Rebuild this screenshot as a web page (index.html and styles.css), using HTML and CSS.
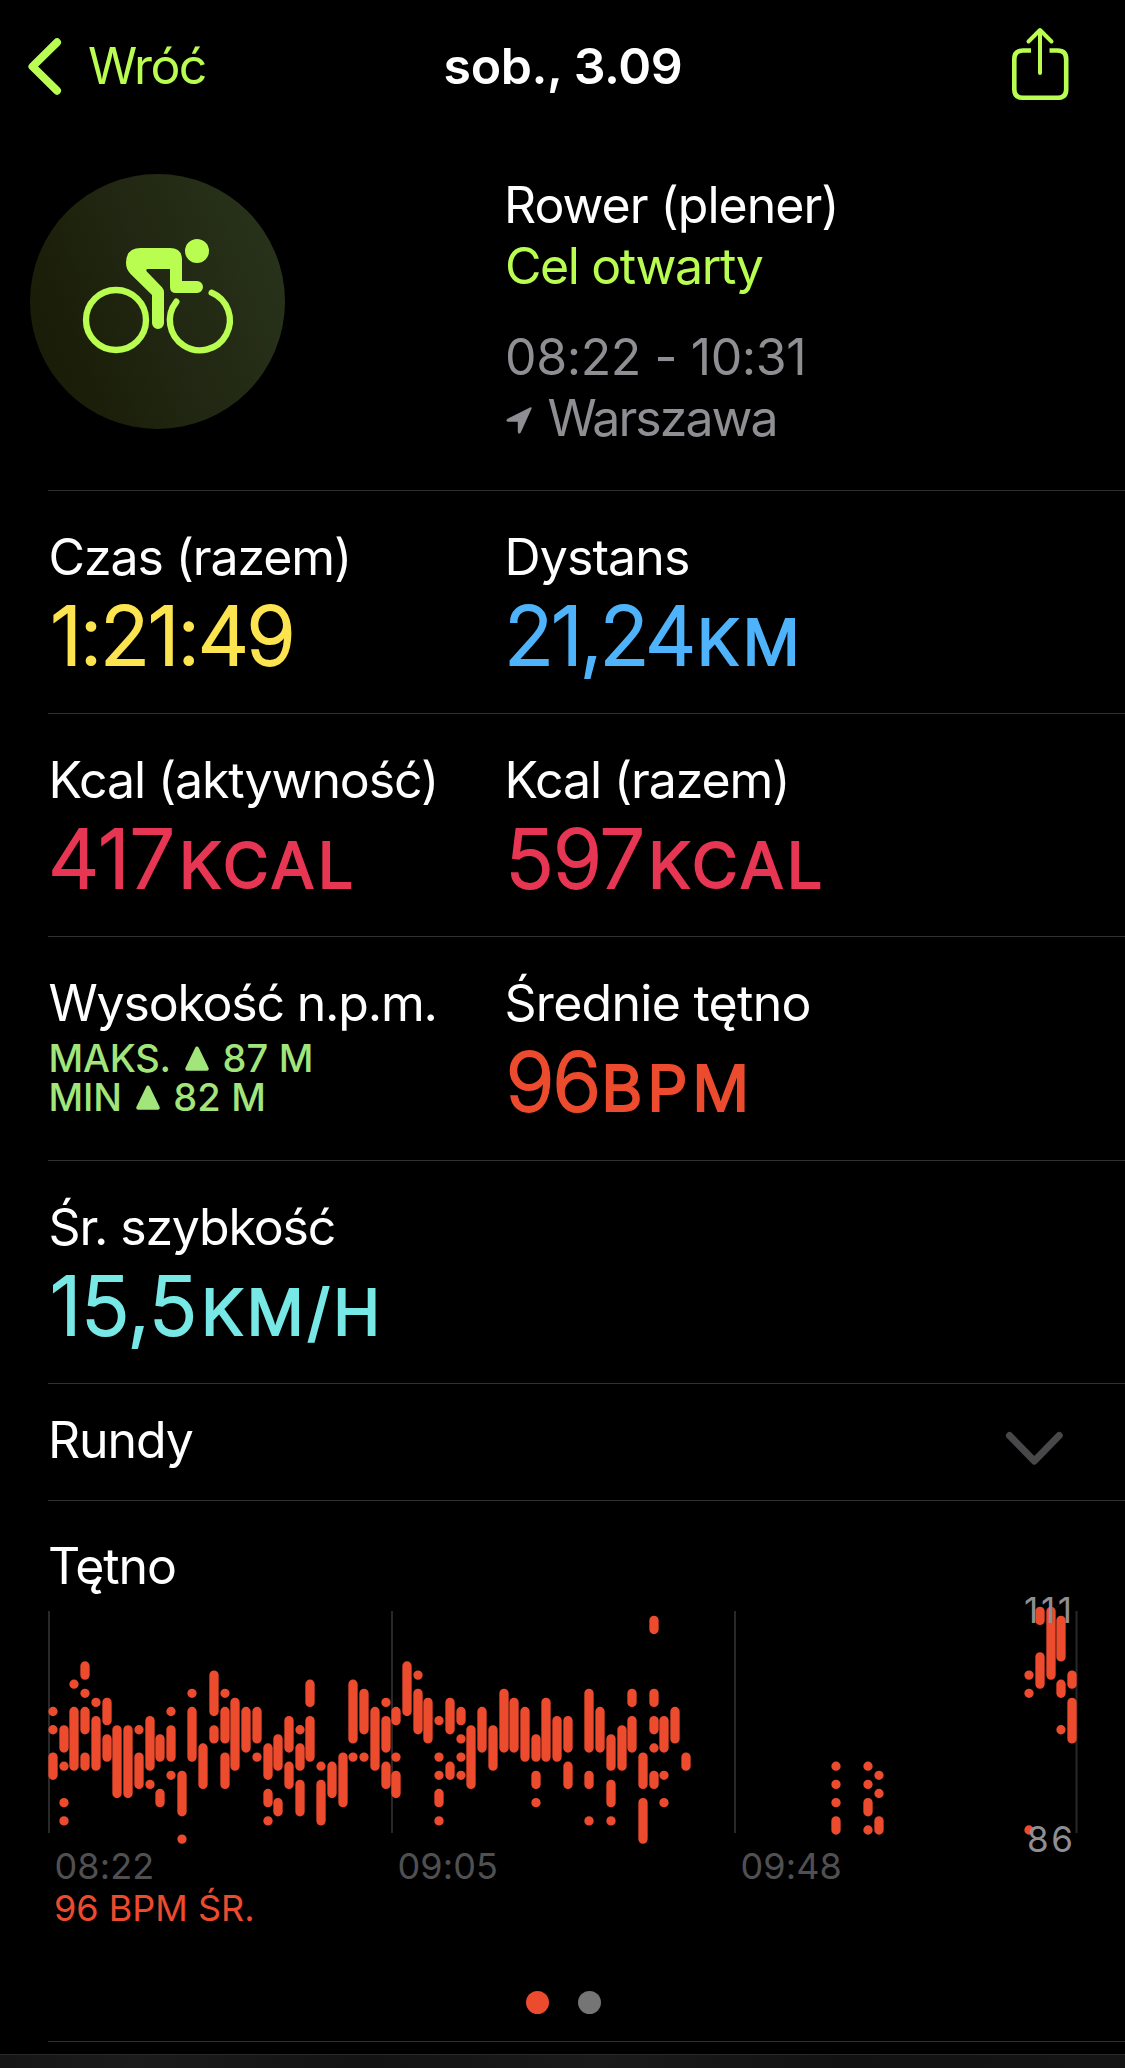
FILE: index.html
```html
<!DOCTYPE html>
<html lang="pl">
<head>
<meta charset="utf-8">
<title>sob., 3.09</title>
<link rel="stylesheet" href="styles.css">
</head>
<body>
<header class="nav">
  <a class="back">
    <svg class="back-icon" viewBox="28 37 33 57"><path d="M57 41.3 32.5 65.5 57 89.7"/></svg>
    <span class="back-text">Wróć</span>
  </a>
  <h1 class="title">sob., 3.09</h1>
  <svg class="share-icon" viewBox="1010 26 60 76"><path class="box" d="M1031 50.5h-8q-8.700 0-8.700 8.700v30q0 8.600 8.700 8.600h34.500q8.700 0 8.700-8.600v-30q0-8.700-8.700-8.700h-8"/><path class="arrow" d="M1040 73V30.500M1028.500 41.500 1040 30l11.500 11.500"/></svg>
</header>

<section class="summary">
  <div class="badge">
    <svg viewBox="30 27 765 765">
      <g class="wheels">
        <circle cx="288" cy="465" r="90"/>
        <path d="M469 410A90 90 0 1 0 575 383"/>
      </g>
      <circle class="solid" cx="531" cy="258" r="36"/>
      <path class="solid" d="M362 249H450Q486 249 486 285V348H531A18 18 0 0 1 531 384H468Q450 384 450 366V312H382Q376 314 381 320L426 367Q432 374 432 382V474A18 18 0 0 1 396 474V390L331 326Q318 312 318 294Q318 249 362 249Z"/>
    </svg>
  </div>
  <div class="summary-text">
    <p class="label name">Rower (plener)</p>
    <p class="label goal">Cel otwarty</p>
    <p class="label hours">08:22 - 10:31</p>
    <p class="label place"><svg class="pin" viewBox="505 406 28 29"><path d="M530.500 407.300 507.500 418.800Q505 421 508 421.800H517.800V432Q518.800 435 520.800 432.500L531.600 408.500Q531.900 406.800 530.500 407.300Z"/></svg><span>Warszawa</span></p>
  </div>
</section>

<main class="details">
  <section class="row">
    <div class="metric"><h2 class="label time-total">Czas (razem)</h2><p class="value yellow duration">1:21:49</p></div>
    <div class="metric"><h2 class="label distance">Dystans</h2><p class="value blue distance-value">21,24<span class="unit">KM</span></p></div>
  </section>
  <section class="row">
    <div class="metric"><h2 class="label">Kcal (aktywność)</h2><p class="value pink active">417<span class="unit">KCAL</span></p></div>
    <div class="metric"><h2 class="label kcal">Kcal (razem)</h2><p class="value pink total">597<span class="unit">KCAL</span></p></div>
  </section>
  <section class="row tall">
    <div class="metric"><h2 class="label altitude">Wysokość n.p.m.</h2>
      <div class="levels">
        <p class="level"><span>MAKS.</span><svg viewBox="0 0 24 25"><path d="M12 2.500 21.800 22.800H2.200Z"/></svg><span class="num">87 M</span></p>
        <p class="level"><span>MIN</span><svg viewBox="0 0 24 25"><path d="M12 2.500 21.800 22.800H2.200Z"/></svg><span class="num">82 M</span></p>
      </div>
    </div>
    <div class="metric"><h2 class="label pulse">Średnie tętno</h2><p class="value red">96<span class="unit bpm">BPM</span></p></div>
  </section>
  <section class="row">
    <div class="metric"><h2 class="label speed">Śr. szybkość</h2><p class="value cyan speed-value">15,5<span class="unit">KM/H</span></p></div>
  </section>
  <section class="laps">
    <h2 class="label laps-title">Rundy</h2>
    <svg class="chevron" viewBox="1006 1432 57 34"><path d="M1009.500 1435.500 1034.300 1461 1059.200 1435.500"/></svg>
  </section>
  <section class="heart">
    <h2 class="label">Tętno</h2>
    <svg class="chart" viewBox="48 1600 1077 245">
      <path class="grid" d="M49 1611V1833M392 1611V1833M735 1611V1833M1076.500 1611V1833"/>
      <path class="bars" id="bars"/>
      <text class="scale" x="1024" y="1623" textLength="48">111</text>
      <text class="scale" x="1027" y="1852" textLength="46">86</text>
    </svg>
    <div class="axis"><span>08:22</span><span>09:05</span><span>09:48</span></div>
    <p class="average">96 BPM ŚR.</p>
    <div class="pager"><i class="on"></i><i></i></div>
  </section>
</main>
<footer class="tabbar"></footer>
<script src="chart.js"></script>
</body>
</html>
```
FILE: styles.css
```css
* { box-sizing: border-box; }
body, h1, h2, p { margin: 0; }
body {
  width: 1125px;
  height: 2068px;
  overflow: hidden;
  display: flex;
  flex-direction: column;
  background: #000;
  color: #fff;
  font-family: Inter, "Noto Sans", sans-serif;
  font-size: 50px;
  line-height: 61px;
}
svg { display: block; flex: none; overflow: visible; fill: none; stroke-linecap: round; stroke-linejoin: round; }

.nav {
  height: 132px;
  padding: 0 55px 0 28px;
  display: grid;
  grid-template-columns: 1fr auto 1fr;
  align-items: center;
}
.back { display: flex; align-items: center; gap: 27px; color: #b9fd51; }
.back-icon { width: 33px; height: 57px; stroke: #b9fd51; stroke-width: 8; }
.back-text { letter-spacing: -1.6px; }
.title { font-size: 50px; font-weight: 600; letter-spacing: -0.4px; margin-left: 28px; }
.share-icon { width: 60px; height: 76px; justify-self: end; margin-top: -4px; stroke: #b9fd51; stroke-width: 4.6; }
.share-icon .box { stroke-linecap: butt; }
.share-icon .arrow { stroke-width: 4; }

.summary {
  height: 358px;
  padding: 42px 0 0 30px;
  display: grid;
  grid-template-columns: 474px 1fr;
  flex: none;
}
.summary-text { padding-top: 1px; }
.badge { width: 255px; height: 255px; border-radius: 50%; background: linear-gradient(68deg, #191c07 10%, #212712 50%, #28321a 90%); }
.wheels { stroke: #b9fd51; stroke-width: 19; }
.solid { fill: #b9fd51; }
.label { font-size: 50px; font-weight: 400; line-height: 61px; letter-spacing: -1.1px; white-space: nowrap; }
.name { letter-spacing: -1px; }
.goal { color: #b9fd51; letter-spacing: -1.4px; padding-left: 1px; }
.hours { color: #8e8e93; letter-spacing: -0.4px; margin-top: 30px; padding-left: 1px; }
.place { color: #8e8e93; letter-spacing: -1.95px; display: flex; align-items: center; gap: 14.5px; padding-left: 1px; }
.pin { width: 28px; height: 29px; fill: #8e8e93; margin-top: 3px; }

.details { padding-left: 48px; }
.row {
  height: 223px;
  padding-top: 36px;
  border-top: 1px solid #303032;
  display: grid;
  grid-template-columns: 456px 1fr;
}
.row .label { padding-left: 0.5px; }
.tall { height: 224px; }
.time-total, .kcal { letter-spacing: -1.1px; }
.distance { letter-spacing: -0.9px; }
.altitude { letter-spacing: -1.2px; }
.pulse { letter-spacing: -0.72px; }
.speed { letter-spacing: -1.15px; }
.value {
  margin-top: 2px;
  padding-left: 1.5px;
  font-size: 81.5px;
  font-weight: 300;
  line-height: 91px;
  letter-spacing: -2.4px;
  white-space: nowrap;
  -webkit-text-stroke: 2px currentColor;
  stroke-linejoin: round;
}
.duration { padding-left: 2px; letter-spacing: -2.5px; }
.distance-value { padding-left: 0; letter-spacing: -3.2px; }
.active { padding-left: 0; letter-spacing: -0.2px; }
.total { letter-spacing: -0.9px; }
.speed-value { letter-spacing: -0.2px; }
.unit { margin-left: 4px; font-size: 63px; font-weight: 400; line-height: 62px; letter-spacing: 3.4px; -webkit-text-stroke-width: 1.8px; }
.bpm { margin-left: 2.5px; letter-spacing: 4.8px; }
.yellow { color: #fbe450; }
.blue { color: #4fb3fb; }
.pink { color: #e73653; }
.red { color: #ec4b2e; }
.cyan { color: #77e8e5; }
.levels { margin-top: 5px; padding-left: 0.5px; color: #a2e57b; font-size: 38px; font-weight: 500; line-height: 39px; }
.level { display: flex; align-items: center; letter-spacing: -0.2px; }
.level svg { width: 24px; height: 25px; margin: 0 13px 0 14.5px; fill: #a2e57b; stroke: #a2e57b; stroke-width: 4; }
.num { letter-spacing: 0.2px; }

.laps {
  height: 117px;
  padding: 26px 62px 0 0;
  border-top: 1px solid #303032;
  display: flex;
  justify-content: space-between;
}
.laps-title { letter-spacing: -1.1px; }
.chevron { width: 57px; height: 34px; margin-top: 22px; stroke: #48484a; stroke-width: 7; }

.heart { height: 542px; padding-top: 35px; border-top: 1px solid #303032; border-bottom: 1px solid #303032; }
.chart { width: 1077px; height: 245px; margin-top: 3px; }
.grid { stroke: #29292a; stroke-width: 2; stroke-linecap: butt; }
.bars { stroke: #ec4b2e; stroke-width: 9.3; }
.scale { fill: #8e8e93; font-size: 35px; }
.axis { display: grid; grid-template-columns: 343px 343px 1fr; padding-left: 6.5px; color: #505052; font-size: 36px; line-height: 42px; letter-spacing: 0.1px; }
.average { padding-left: 6px; color: #ec4b2e; font-size: 36px; line-height: 42px; letter-spacing: 0; }
.pager { display: flex; justify-content: center; gap: 29px; margin: 62px 47px 0 0; }
.pager i { width: 23px; height: 23px; border-radius: 50%; background: #757575; }
.pager .on { background: #ec4b2e; }
.tabbar { margin-top: 12px; height: 14px; flex: none; border-top: 1px solid #2a2a2a; background: linear-gradient(90deg, #161616, #1c1c1c 12%, #131313 33%, #1b1b1b 53%, #121212 75%, #151515); }
```
FILE: chart.js
```js
// Heart-rate samples: column index -> [first step, last step] runs, counted down from the top of the scale.
const samples = {
  0: [[4], [6], [9, 11]], 1: [[6, 8], [10], [14], [16]], 2: [[1], [4, 10]],
  3: [[-1, 0], [2], [4, 6], [9, 10]], 4: [[3], [5, 10]], 5: [[3, 5], [7, 9]],
  6: [[6, 13]], 7: [[6, 13]], 8: [[6], [9, 12]], 9: [[5, 10], [12]],
  10: [[7, 9], [13, 14]], 11: [[4], [6, 9], [11]], 12: [[11, 15], [18]],
  13: [[2], [4, 9]], 14: [[8, 12]], 15: [[0, 4], [6, 7]], 16: [[2], [4, 7], [9, 12]],
  17: [[3, 10]], 18: [[4, 8]], 19: [[4, 7], [9]], 20: [[8, 11], [13, 14], [16]],
  21: [[7, 10], [14, 15]], 22: [[5, 8], [10, 12]], 23: [[6], [8, 10], [12, 15]],
  24: [[1, 3], [5, 9]], 25: [[10], [12, 16]], 26: [[10, 13]], 27: [[9, 14]],
  28: [[1, 7], [9]], 29: [[2, 6], [9]], 30: [[4, 10]], 31: [[3], [5, 8], [10, 12]],
  32: [[4, 5], [9], [11, 13]], 33: [[-1, 4]], 34: [[0], [2, 6]], 35: [[3, 7]],
  36: [[5], [9], [11], [13, 14], [16]], 37: [[3, 6], [10, 11]],
  38: [[4, 5], [7], [9], [11]], 39: [[6, 12]], 40: [[4, 8]], 41: [[6, 10]],
  42: [[2, 8]], 43: [[3, 8]], 44: [[4, 9]], 45: [[7, 9], [11, 12], [14]],
  46: [[3, 9]], 47: [[5, 9]], 48: [[5, 8], [10, 12]], 50: [[2, 8], [11, 12], [16]],
  51: [[4, 8]], 52: [[7, 10], [12, 14], [16]], 53: [[6, 10]], 54: [[2, 3], [5, 8]],
  55: [[9, 12], [14, 18]], 56: [[-6, -5], [2, 3], [5, 6], [8], [11, 12]],
  57: [[5, 8], [11], [14]], 58: [[4, 7]], 59: [[9, 10]],
  73: [[10], [12], [14], [16, 17]], 76: [[10], [12], [14, 15], [17]],
  77: [[11], [13], [16, 17]], 91: [[0], [2], [17]], 92: [[-7, -6], [-2, 1]],
  93: [[-7, 0]], 94: [[-6, -2], [1, 2], [6]], 95: [[0, 1], [3, 7]]
};
const top0 = 1675.1, step = 9.11;
let d = '';
for (const [col, runs] of Object.entries(samples)) {
  const x = Math.round(53 + col * 10.727);
  for (const [from, to = from] of runs) {
    d += `M${x} ${(top0 + from * step).toFixed(1)}V${(top0 + to * step + 0.01).toFixed(2)}`;
  }
}
document.getElementById('bars').setAttribute('d', d);
```
